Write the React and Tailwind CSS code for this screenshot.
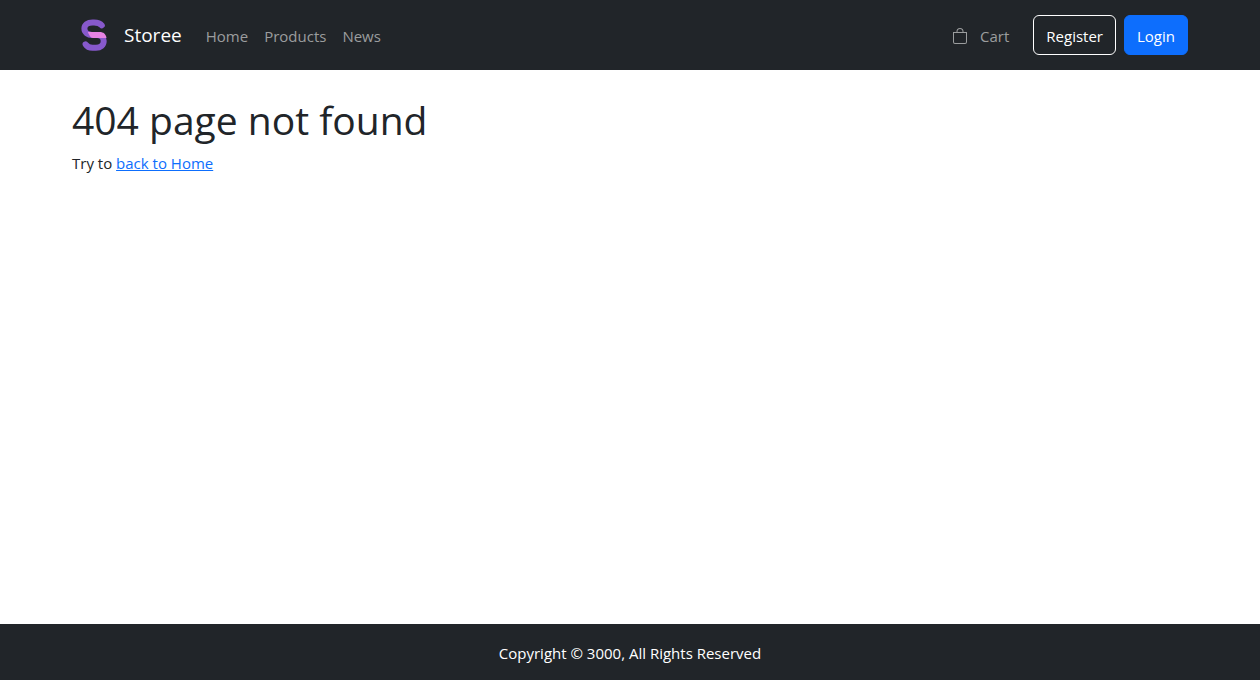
function Logo() {
  return (
    <svg width="44" height="44" viewBox="0 0 44 44" fill="none" aria-hidden="true">
      <path
        d="M29.8 12.3C28 10.1 25.5 9.5 22 9.5H20.5C15.5 9.5 12.4 12 12.4 15.6C12.4 19.6 16 21.9 20 21.9H25C29.3 21.9 31.7 24.2 31.7 28C31.7 32.2 28.5 34.8 24 34.8H20.5C17 34.8 15 33.5 13.6 31.3"
        stroke="#8759cc"
        strokeWidth="6"
        strokeLinecap="round"
        strokeLinejoin="round"
      />
      <path d="M15.8 18.9H27.5C31.5 18.9 34 21 34.5 24.9H21C18.5 24.9 17.3 22 15.8 18.9Z" fill="#e783e3" />
    </svg>
  );
}

function Bag() {
  return (
    <svg width="16" height="16" viewBox="0 0 16 16" fill="currentColor" aria-hidden="true">
      <path d="M8 1a2.5 2.5 0 0 1 2.5 2.5V4h-5v-.5A2.5 2.5 0 0 1 8 1m3.5 3v-.5a3.5 3.5 0 1 0-7 0V4H1v10a2 2 0 0 0 2 2h10a2 2 0 0 0 2-2V4zM2 5h12v9a1 1 0 0 1-1 1H3a1 1 0 0 1-1-1z" />
    </svg>
  );
}

export default function App() {
  return (
    <div className="flex min-h-screen flex-col bg-white font-['Open_Sans','Noto_Sans',sans-serif] text-[15px] leading-6 text-[#212529]">
      <header className="bg-[#212529]">
        <nav className="mx-auto flex max-w-[1140px] items-center px-3 py-[13px]">
          <a href="#" className="flex items-center gap-2 text-[19px] text-white">
            <Logo />
            Storee
          </a>
          <ul className="ml-6 flex gap-4 pt-0.5 text-[#9b9d9e]">
            <li><a href="#">Home</a></li>
            <li><a href="#">Products</a></li>
            <li><a href="#">News</a></li>
          </ul>
          <div className="ml-auto flex items-center gap-2">
            <a href="#" className="mr-4 flex items-center gap-3 pt-0.5 text-[#9b9d9e]">
              <Bag />
              Cart
            </a>
            <button className="h-10 rounded-md border border-white px-3 pt-0.5 text-white">Register</button>
            <button className="h-10 rounded-md border border-[#0d6efd] bg-[#0d6efd] px-3 pt-0.5 text-white">Login</button>
          </div>
        </nav>
      </header>
      <main className="mx-auto w-full max-w-[1140px] grow px-3 pt-[27px]">
        <h1 className="mb-2 text-[39px] leading-[46px]">404 page not found</h1>
        <p>Try to <a href="#" className="text-[#0d6efd] underline">back to Home</a></p>
      </main>
      <footer className="bg-[#212529] px-3 pt-[17px] pb-[15px] text-center text-white">Copyright © 3000, All Rights Reserved</footer>
    </div>
  );
}
